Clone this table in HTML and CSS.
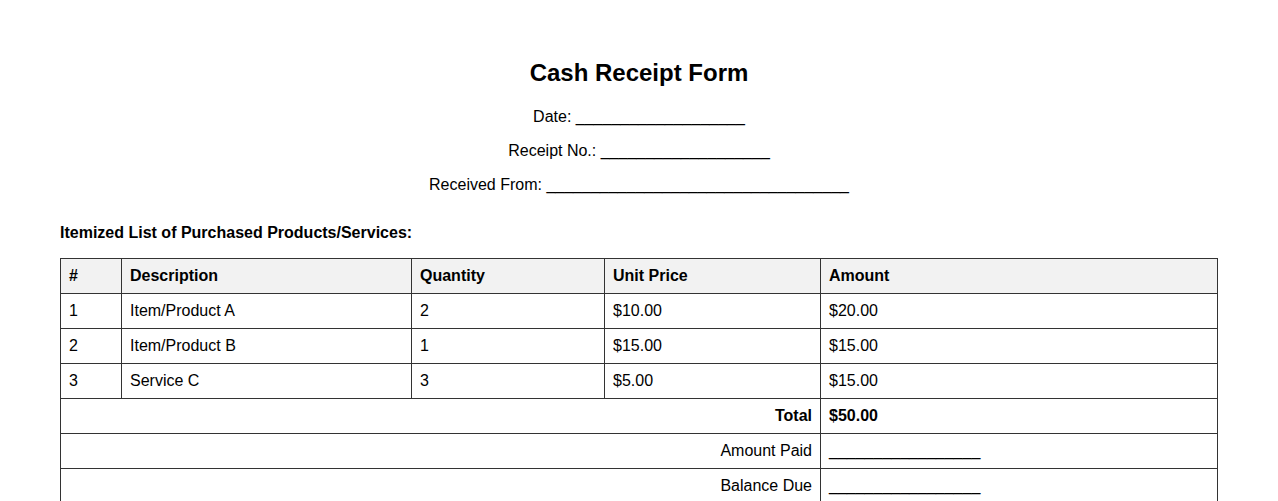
FILE: index.html
```html
<!DOCTYPE html>
<html lang="en">
<head>
<meta charset="utf-8">
<title>Cash Receipt Form</title>
<link rel="stylesheet" href="styles.css">
</head>
<body>
<div class="page">
  <div class="header">
    <h2 class="title">Cash Receipt Form</h2>
    <p>Date: ___________________</p>
    <p>Receipt No.: ___________________</p>
    <p>Received From: __________________________________</p>
  </div>
  <p class="section-label">Itemized List of Purchased Products/Services:</p>
  <table class="items">
    <colgroup>
      <col class="c-num">
      <col class="c-desc">
      <col class="c-qty">
      <col class="c-price">
      <col class="c-amt">
    </colgroup>
    <thead>
      <tr><th>#</th><th>Description</th><th>Quantity</th><th>Unit Price</th><th>Amount</th></tr>
    </thead>
    <tbody>
      <tr><td>1</td><td>Item/Product A</td><td>2</td><td>$10.00</td><td>$20.00</td></tr>
      <tr><td>2</td><td>Item/Product B</td><td>1</td><td>$15.00</td><td>$15.00</td></tr>
      <tr><td>3</td><td>Service C</td><td>3</td><td>$5.00</td><td>$15.00</td></tr>
      <tr class="total"><td colspan="4" class="label">Total</td><td>$50.00</td></tr>
      <tr><td colspan="4" class="label">Amount Paid</td><td>_________________</td></tr>
      <tr><td colspan="4" class="label">Balance Due</td><td>_________________</td></tr>
    </tbody>
  </table>
</div>
</body>
</html>
```
FILE: styles.css
```css
html, body {
  margin: 0;
  padding: 0;
  background: #fff;
}
body {
  font-family: "Liberation Sans", Arial, sans-serif;
  font-size: 16px;
  color: #000;
}
.page {
  padding: 39px 60px 40px;
}
.header {
  text-align: center;
  margin-bottom: 30px;
}
.title {
  font-size: 24px;
  font-weight: bold;
  margin: 20px 0 22px;
  line-height: 27px;
}
.header p {
  margin: 16px 0;
  line-height: 18px;
}
.section-label {
  font-weight: bold;
  margin: 16px 0;
  line-height: 18px;
}
.items {
  width: 100%;
  border-collapse: collapse;
  table-layout: fixed;
}
.c-num { width: 61px; }
.c-desc { width: 290px; }
.c-qty { width: 193px; }
.c-price { width: 216px; }
.items th, .items td {
  border: 1px solid #333;
  padding: 8px;
  line-height: 18px;
  text-align: left;
  vertical-align: middle;
}
.items th {
  background: #f2f2f2;
  font-weight: bold;
}
.items td.label {
  text-align: right;
}
.items tr.total td {
  font-weight: bold;
}
```
